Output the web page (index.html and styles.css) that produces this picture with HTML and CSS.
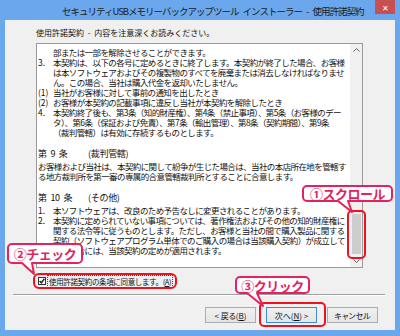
FILE: index.html
```html
<!DOCTYPE html>
<html lang="ja">
<head>
  <meta charset="UTF-8" />
  <title>使用許諾契約</title>
  <link rel="stylesheet" href="styles.css">
</head>
<body>

  <div class="window">
    <div class="titlebar">
      <div class="title">セキュリティUSBメモリーバックアップツール インストーラー - 使用許諾契約</div>
      <div class="close">✕</div>
    </div>

    <div class="dialog">
      <div class="intro">使用許諾契約 - 内容を注意深くお読みください。</div>

      <div class="license">
        <div class="license-text">
          <div class="ln"><span class="num"></span><span>部または一部を解除させることができます。</span></div>
          <div class="ln"><span class="num">3.</span><span>本契約は、以下の各号に定めるときに終了します。本契約が終了した場合、お客様</span></div>
          <div class="ln"><span class="num"></span><span>は本ソフトウェアおよびその複製物のすべてを廃棄または消去しなければなりませ</span></div>
          <div class="ln"><span class="num"></span><span>ん。この場合、当社は購入代金を返却いたしません。</span></div>
          <div class="ln"><span class="num">(1)</span><span>当社がお客様に対して事前の通知を出したとき</span></div>
          <div class="ln"><span class="num">(2)</span><span>お客様が本契約の記載事項に違反し当社が本契約を解除したとき</span></div>
          <div class="ln"><span class="num">4.</span><span>本契約終了後も、第3条（知的財産権）、第4条（禁止事項）、第5条（お客様のデー</span></div>
          <div class="ln"><span class="num"></span><span>タ）、第6条（保証および免責）、第7条（輸出管理）、第8条（契約期間）、第9条</span></div>
          <div class="ln"><span class="num"></span><span>（裁判管轄）は有効に存続するものとします。</span></div>
          <div class="blank"></div>
          <div class="heading"><span class="h-num">第 9 条</span><span>(裁判管轄)</span></div>
          <div class="ln"><span>お客様および当社は、本契約に関して紛争が生じた場合は、当社の本店所在地を管轄す</span></div>
          <div class="ln"><span>る地方裁判所を第一審の専属的合意管轄裁判所とすることに合意します。</span></div>
          <div class="blank"></div>
          <div class="heading"><span class="h-num">第 10 条</span><span>(その他)</span></div>
          <div class="ln"><span class="num">1.</span><span>本ソフトウェアは、改良のため予告なしに変更されることがあります。</span></div>
          <div class="ln"><span class="num">2.</span><span>本契約に定められていない事項については、著作権法およびその他の知的財産権に</span></div>
          <div class="ln"><span class="num"></span><span>関する法令等に従うものとします。ただし、お客様と当社の間で購入製品に関する</span></div>
          <div class="ln"><span class="num"></span><span>契約（ソフトウェアプログラム単体でのご購入の場合は当該購入契約）が成立して</span></div>
          <div class="ln"><span class="num"></span><span>いる場合には、当該契約の定めが適用されます。</span></div>
        </div>
        <div class="scrollbar">
          <div class="arrow">
            <svg width="7" height="4" viewBox="0 0 7 4"><path d="M0.5 3.5 L3.5 0.5 L6.5 3.5" fill="none" stroke="#606060" stroke-width="1"/></svg>
          </div>
          <div class="track"><div class="thumb"></div></div>
          <div class="arrow">
            <svg width="7" height="4" viewBox="0 0 7 4"><path d="M0.5 0.5 L3.5 3.5 L6.5 0.5" fill="none" stroke="#606060" stroke-width="1"/></svg>
          </div>
        </div>
      </div>

      <div class="agree">
        <span class="checkbox">
          <svg width="6" height="6" viewBox="0 0 6 6"><path d="M0.6 3 L2.3 4.8 L5.4 0.8" fill="none" stroke="#222" stroke-width="1.4"/></svg>
        </span>
        <span class="agree-label">使用許諾契約の条項に同意します。(<u>A</u>)</span>
      </div>

      <div class="separator"></div>

      <div class="buttons">
        <div class="btn">&lt; 戻る(<u>B</u>)</div>
        <div class="btn btn-default">次へ(<u>N</u>) &gt;</div>
        <div class="btn">キャンセル</div>
      </div>
    </div>

    <!-- annotations drawn over the dialog -->
    <div class="mark mark-thumb"></div>
    <div class="mark mark-agree"></div>
    <div class="mark mark-next"></div>

    <div class="callout callout-scroll">
      <svg width="91" height="17"><path d="M5,1 H86 A4,4 0 0 1 90,5 V12 A4,4 0 0 1 86,16 H46 L50,27 L36,16 H5 A4,4 0 0 1 1,12 V5 A4,4 0 0 1 5,1 Z"/></svg>
      <span class="callout-label">①スクロール</span>
    </div>
    <div class="callout callout-check">
      <svg width="76" height="21"><path d="M5,1 H71 A4,4 0 0 1 75,5 V16 A4,4 0 0 1 71,20 H25 L27,31 L15,20 H5 A4,4 0 0 1 1,16 V5 A4,4 0 0 1 5,1 Z"/></svg>
      <span class="callout-label">②チェック</span>
    </div>
    <div class="callout callout-click">
      <svg width="75" height="18"><path d="M5,1 H70 A4,4 0 0 1 74,5 V13 A4,4 0 0 1 70,17 H22 L28,30 L12,17 H5 A4,4 0 0 1 1,13 V5 A4,4 0 0 1 5,1 Z"/></svg>
      <span class="callout-label">③クリック</span>
    </div>
  </div>

</body>
</html>
```

FILE: styles.css
```css
body {
  margin: 0;
  font-family: "Noto Sans CJK JP", "Noto Sans", sans-serif;
  color: #111;
}
.window {
  position: relative;
  width: 400px;
  height: 336px;
  box-sizing: border-box;
  padding: 0 5px 6px;
  background-color: #6ba7ec;
  display: flex;
  flex-direction: column;
}
.titlebar {
  height: 20px;
  display: flex;
  align-items: flex-start;
}
.title {
  flex: 1;
  padding-left: 57px;
  font-size: 9.5px;
  letter-spacing: -1px;
  word-spacing: 3px;
  line-height: 22px;
  color: #1a1a1a;
  white-space: nowrap;
}
.close {
  width: 20px;
  height: 14px;
  flex: none;
  background-color: #c75050;
  color: white;
  font-size: 8px;
  display: flex;
  align-items: center;
  justify-content: center;
}
.dialog {
  flex: 1;
  background-color: #f0f0f0;
  padding-top: 7px;
  display: flex;
  flex-direction: column;
}
.intro {
  font-size: 8px;
  word-spacing: 2px;
  line-height: 12px;
  padding-left: 31px;
}
.license {
  margin: 4px 32px 0 31px;
  height: 225px;
  box-sizing: border-box;
  border: 1px solid #9a9a9a;
  background-color: white;
  display: flex;
}
.license-text {
  flex: 1;
  padding: 3px 0 0 1px;
  overflow: hidden;
  font-size: 8.5px;
  letter-spacing: -0.6px;
}
.ln {
  display: flex;
  height: 10px;
  line-height: 10px;
  white-space: nowrap;
}
.num {
  width: 15px;
  flex: none;
  letter-spacing: 0;
}
.blank {
  height: 10px;
}
.heading {
  display: flex;
  height: 14px;
  line-height: 14px;
  white-space: nowrap;
  font-size: 9px;
  letter-spacing: -0.3px;
}
.h-num {
  width: 50px;
  flex: none;
  word-spacing: 2px;
}
.scrollbar {
  width: 12px;
  flex: none;
  background-color: #f0f0f0;
  display: flex;
  flex-direction: column;
}
.arrow {
  height: 12px;
  display: flex;
  align-items: center;
  justify-content: center;
}
.track {
  flex: 1;
  display: flex;
  flex-direction: column;
  justify-content: flex-end;
  align-items: center;
  padding-bottom: 1px;
}
.thumb {
  width: 9px;
  height: 40px;
  background-color: #cdcdcd;
}
.agree {
  margin-top: 6px;
  height: 14px;
  padding-left: 33px;
  display: flex;
  align-items: center;
}
.checkbox {
  width: 8px;
  height: 8px;
  box-sizing: border-box;
  border: 1px solid #333;
  background-color: white;
  display: flex;
  align-items: center;
  justify-content: center;
}
.agree-label {
  margin-left: 2px;
  padding: 0 1px;
  font-size: 7.5px;
  letter-spacing: -0.35px;
  line-height: 11px;
  outline: 1px dotted #444;
}
.separator {
  margin: 6px 10px 0 8px;
  height: 1px;
  background-color: #a0a0a0;
  border-bottom: 1px solid #fff;
}
.buttons {
  margin-top: 11px;
  padding-right: 17px;
  display: flex;
  justify-content: flex-end;
  gap: 10px;
}
.btn {
  width: 51px;
  height: 16px;
  box-sizing: border-box;
  border: 1px solid #acacac;
  background: linear-gradient(#f0f0f0, #e5e5e5);
  font-size: 8px;
  font-feature-settings: "palt";
  display: flex;
  align-items: center;
  justify-content: center;
}
.btn-default {
  border-color: #3c8ad8;
}
.mark {
  position: absolute;
  box-sizing: border-box;
  border: 2px solid #f0101e;
  border-radius: 5px;
}
.mark-thumb {
  left: 347px;
  top: 210px;
  width: 19px;
  height: 49px;
}
.mark-agree {
  left: 33px;
  top: 273px;
  width: 144px;
  height: 16px;
  border-radius: 6px;
}
.mark-next {
  left: 259px;
  top: 302px;
  width: 67px;
  height: 25px;
}
.callout {
  position: absolute;
  display: flex;
  align-items: center;
  justify-content: center;
}
.callout svg {
  position: absolute;
  left: 0;
  top: 0;
  overflow: visible;
}
.callout path {
  fill: white;
  stroke: #e3245c;
  stroke-width: 2;
  stroke-linejoin: round;
}
.callout-label {
  position: relative;
  font-size: 13px;
  font-weight: bold;
  color: #e3245c;
  letter-spacing: -0.5px;
  white-space: nowrap;
}
.callout-scroll {
  left: 302px;
  top: 185px;
  width: 91px;
  height: 17px;
}
.callout-check {
  left: 7px;
  top: 243px;
  width: 76px;
  height: 21px;
}
.callout-click {
  left: 235px;
  top: 276px;
  width: 75px;
  height: 18px;
}
```
